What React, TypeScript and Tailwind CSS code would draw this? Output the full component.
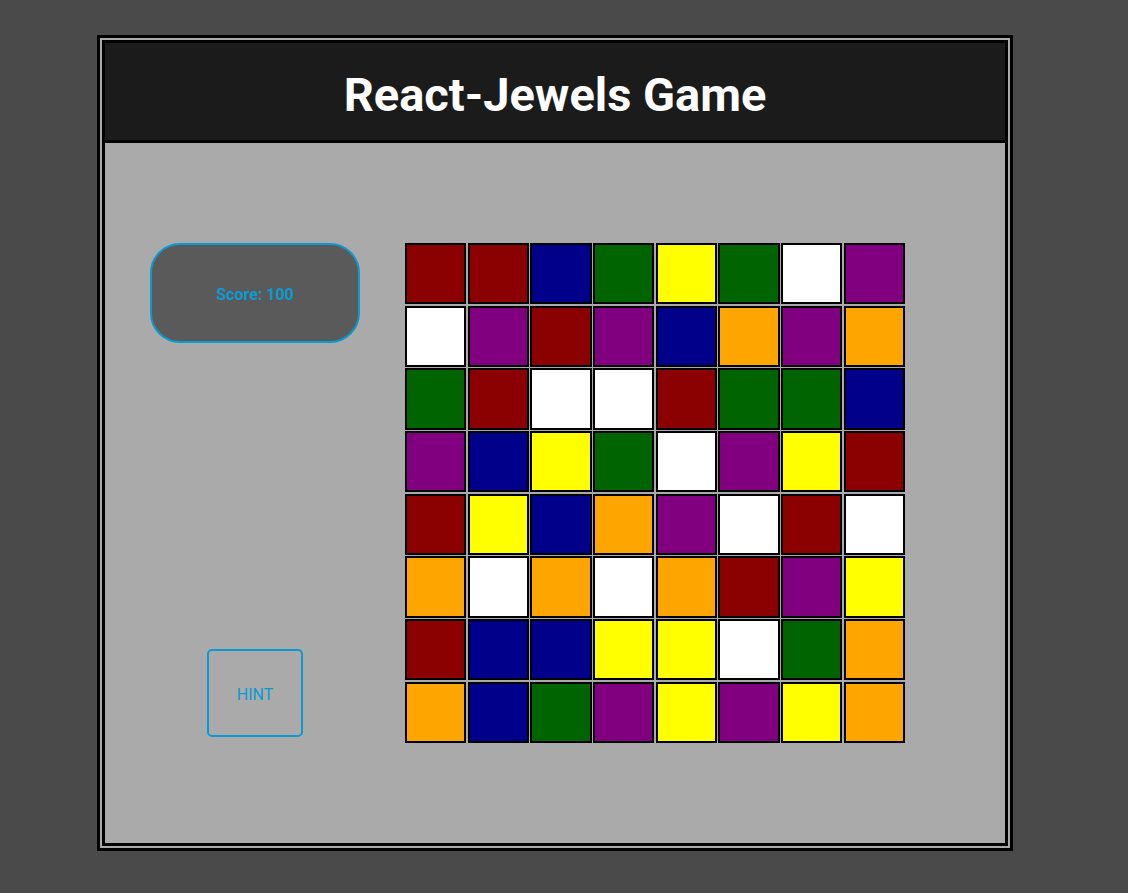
import React from "react";

const C: Record<string, string> = {
  r: "bg-[#8b0000]",
  b: "bg-[#00008b]",
  g: "bg-[#006400]",
  y: "bg-[#ffff00]",
  w: "bg-[#ffffff]",
  p: "bg-[#800080]",
  o: "bg-[#ffa500]",
};

const rows = [
  "rrbgygwp",
  "wprpbopo",
  "grwwrggb",
  "pbygwpyr",
  "rybopwrw",
  "owoworpy",
  "rbbyywgo",
  "obgpypyo",
];

export default function App() {
  return (
    <div
      className="min-h-[893px] w-full bg-[#4a4a4a] pt-[35px] pl-[97px]"
      style={{ fontFamily: "Roboto, 'Noto Sans', sans-serif" }}
    >
      <div className="w-[916px] h-[816px] border-[8px] border-double border-black bg-[#aaaaaa] flex flex-col">
        <div className="h-[100px] pt-[6px] bg-[#1b1b1b] border-b-[3px] border-black flex items-center justify-center">
          <h1 className="text-white font-bold text-[47px] leading-none">React-Jewels Game</h1>
        </div>
        <div className="flex-1 flex pt-[100px] pl-[45px]">
          <div className="w-[210px] flex flex-col items-center">
            <div className="w-[210px] h-[100px] pt-[4px] rounded-[30px] border-2 border-[#0b9ad0] bg-[#5a5a5a] flex items-center justify-center">
              <span className="text-[#0b9ad0] font-bold text-[16px]">Score: 100</span>
            </div>
            <button className="mt-[306px] w-[96px] h-[88px] pt-[4px] rounded-[5px] border-2 border-[#0b9ad0] text-[#0b9ad0] text-[16px] flex items-center justify-center">
              HINT
            </button>
          </div>
          <div className="ml-[45px] w-[500px] h-[500px] grid grid-cols-8 grid-rows-8 gap-[1.5px]">
            {rows.flatMap((row, i) =>
              row.split("").map((c, j) => (
                <div key={`${i}-${j}`} className={`border-2 border-black ${C[c]}`} />
              ))
            )}
          </div>
        </div>
      </div>
    </div>
  );
}
